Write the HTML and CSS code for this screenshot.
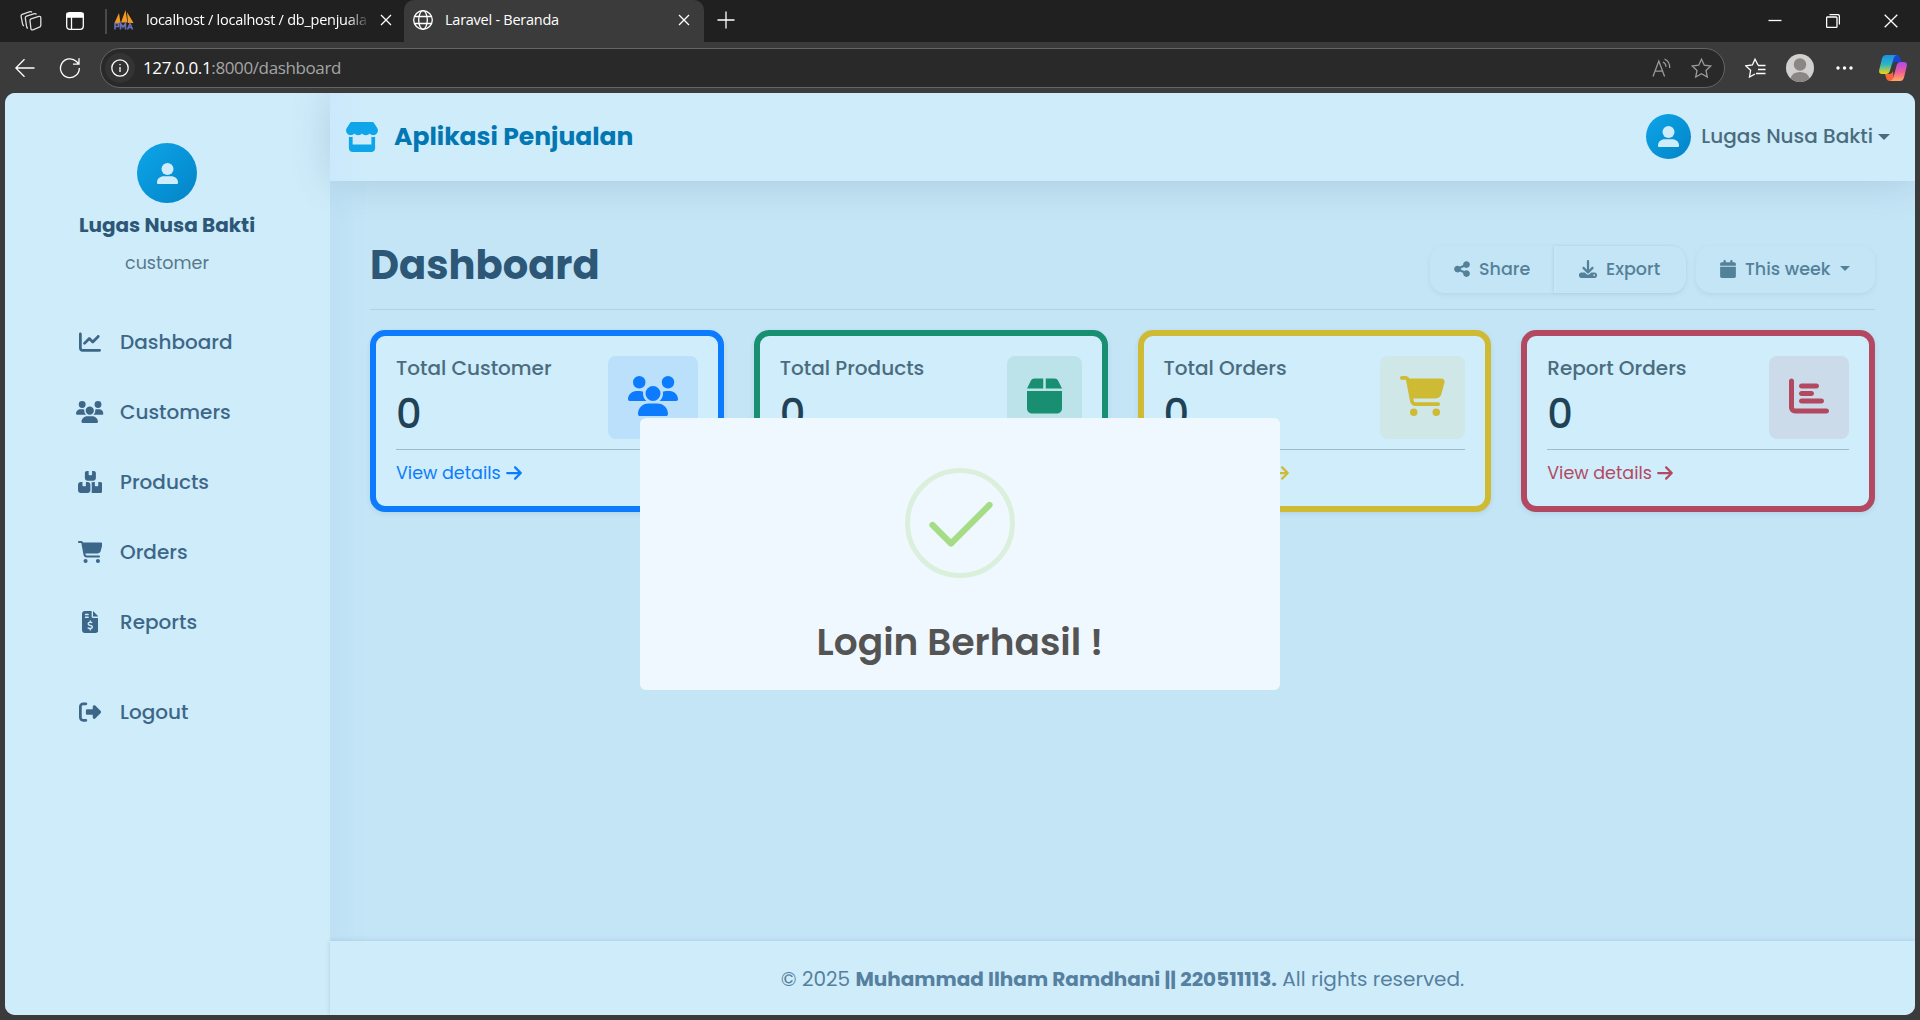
FILE: index.html
```html
<!DOCTYPE html>
<html lang="id">
<head>
<meta charset="utf-8">
<title>Laravel - Beranda</title>
<link rel="stylesheet" href="styles.css">
</head>
<body>
<svg class="defs" width="0" height="0">
  <defs>
    <symbol id="user" viewBox="0 0 21 21"><circle cx="10.5" cy="6" r="6"/><path d="M0 19.4C0 15.8 3 13.3 7 13.3h7c4 0 7 2.5 7 6.1 0 1.100-.5 1.600-1.300 1.600H1.300C.5 21 0 20.500 0 19.400z"/></symbol>
    <symbol id="store" viewBox="0 0 576 512"><path d="M547.6 103.8L490.3 13.1C485.2 5 476.1 0 466.4 0L109.6 0C99.900 0 90.800 5 85.700 13.100L28.300 103.800c-29.600 46.800-3.400 111.900 51.900 119.400c4 .5 8.100 .8 12.100 .8c26.100 0 49.300-11.400 65.200-29c15.900 17.600 39.100 29 65.200 29c26.100 0 49.300-11.400 65.200-29c15.900 17.600 39.100 29 65.200 29c26.200 0 49.300-11.400 65.200-29c16 17.600 39.100 29 65.200 29c4.100 0 8.100-.3 12.100-.8c55.500-7.400 81.800-72.500 52.100-119.400zM499.700 254.900l-.1 0c-5.300 .7-10.700 1.100-16.200 1.100c-12.400 0-24.300-1.900-35.400-5.300L448 384l-320 0 0-133.400c-11.200 3.500-23.200 5.400-35.600 5.400c-5.500 0-11-.4-16.300-1.100l-.1 0c-4.100-.6-8.100-1.300-12-2.300L64 384l0 64c0 35.300 28.700 64 64 64l320 0c35.300 0 64-28.700 64-64l0-64 0-131.400c-4 1-8 1.800-12.300 2.300z"/></symbol>
    <symbol id="line" viewBox="0 0 512 512"><path d="M64 64c0-17.700-14.300-32-32-32S0 46.300 0 64L0 400c0 44.200 35.800 80 80 80l400 0c17.700 0 32-14.300 32-32s-14.300-32-32-32L80 416c-8.800 0-16-7.200-16-16L64 64zm406.600 86.600c12.500-12.500 12.500-32.800 0-45.300s-32.800-12.500-45.300 0L320 210.700l-57.400-57.400c-12.500-12.500-32.800-12.500-45.300 0l-112 112c-12.500 12.500-12.500 32.800 0 45.300s32.800 12.500 45.300 0L240 221.300l57.400 57.400c12.500 12.500 32.800 12.500 45.300 0l128-128z"/></symbol>
    <symbol id="users" viewBox="0 0 640 512"><path d="M144 0a80 80 0 1 1 0 160A80 80 0 1 1 144 0zM512 0a80 80 0 1 1 0 160A80 80 0 1 1 512 0zM0 298.700C0 239.800 47.800 192 106.700 192l42.700 0c15.900 0 31 3.500 44.600 9.700c-1.300 7.200-1.900 14.700-1.900 22.300c0 38.200 16.800 72.500 43.300 96c-.2 0-.4 0-.7 0L21.300 320C9.600 320 0 310.400 0 298.700zM405.300 320c-.2 0-.4 0-.7 0c26.600-23.500 43.300-57.800 43.300-96c0-7.600-.7-15-1.900-22.300c13.600-6.300 28.700-9.700 44.600-9.700l42.700 0C592.200 192 640 239.800 640 298.700c0 11.800-9.600 21.300-21.300 21.300l-213.300 0zM224 224a96 96 0 1 1 192 0 96 96 0 1 1 -192 0zM128 485.300C128 411.700 187.700 352 261.300 352l117.300 0C452.300 352 512 411.700 512 485.300c0 14.700-11.900 26.700-26.700 26.700l-330.700 0c-14.700 0-26.700-11.900-26.700-26.700z"/></symbol>
    <symbol id="boxes" viewBox="0 0 576 512"><path d="M248 0L208 0c-26.500 0-48 21.500-48 48l0 112c0 35.300 28.700 64 64 64l128 0c35.300 0 64-28.700 64-64l0-112c0-26.500-21.500-48-48-48L328 0l0 80c0 8.800-7.200 16-16 16l-48 0c-8.800 0-16-7.200-16-16l0-80zM64 256c-35.300 0-64 28.700-64 64L0 448c0 35.300 28.700 64 64 64l160 0c35.300 0 64-28.700 64-64l0-128c0-35.300-28.700-64-64-64l-40 0 0 80c0 8.800-7.200 16-16 16l-48 0c-8.800 0-16-7.200-16-16l0-80-40 0zM352 512l160 0c35.300 0 64-28.700 64-64l0-128c0-35.300-28.700-64-64-64l-40 0 0 80c0 8.800-7.200 16-16 16l-48 0c-8.800 0-16-7.200-16-16l0-80-40 0c-15 0-28.800 5.100-39.700 13.800c4.900 10.400 7.700 22 7.700 34.200l0 160c0 12.200-2.800 23.800-7.700 34.200C323.200 506.900 337 512 352 512z"/></symbol>
    <symbol id="cart" viewBox="0 0 576 512"><path d="M0 24C0 10.700 10.700 0 24 0L69.500 0c22 0 41.500 12.800 50.600 32l411 0c26.300 0 45.500 25 38.600 50.400l-41 152.300c-8.500 31.400-37 53.300-69.500 53.300l-288.500 0 5.400 28.500c2.200 11.300 12.100 19.500 23.600 19.500L488 336c13.300 0 24 10.700 24 24s-10.700 24-24 24l-288.300 0c-34.600 0-64.300-24.600-70.700-58.500L77.400 54.500c-.7-3.800-4-6.500-7.900-6.500L24 48C10.700 48 0 37.300 0 24zM128 464a48 48 0 1 1 96 0 48 48 0 1 1 -96 0zm336-48a48 48 0 1 1 0 96 48 48 0 1 1 0-96z"/></symbol>
    <symbol id="invoice" viewBox="0 0 384 512"><path d="M64 0C28.700 0 0 28.700 0 64L0 448c0 35.300 28.700 64 64 64l256 0c35.300 0 64-28.700 64-64l0-288-128 0c-17.700 0-32-14.300-32-32L224 0 64 0zM256 0l0 128 128 0L256 0zM64 80c0-8.800 7.200-16 16-16l64 0c8.800 0 16 7.200 16 16s-7.200 16-16 16L80 96c-8.800 0-16-7.200-16-16zm0 64c0-8.800 7.200-16 16-16l64 0c8.800 0 16 7.200 16 16s-7.200 16-16 16l-64 0c-8.800 0-16-7.200-16-16zm128 72c8.800 0 16 7.200 16 16l0 17.300c8.500 1.200 16.700 3.100 24.100 5.100c8.500 2.300 13.600 11 11.300 19.600s-11 13.600-19.600 11.300c-11.100-3-22-5.200-32.100-5.300c-8.400-.1-17.400 1.800-23.600 5.500c-5.700 3.400-8.100 7.300-8.100 12.800c0 3.700 1.300 6.500 7.300 10.100c6.900 4.100 16.600 7.100 29.200 10.900l.5 .1c11.300 3.400 25.300 7.600 36.300 14.600c12.100 7.600 22.400 19.700 22.700 38.200c.3 19.300-9.600 33.300-22.900 41.600c-7.700 4.800-16.400 7.600-25.100 9.100l0 17.100c0 8.800-7.200 16-16 16s-16-7.200-16-16l0-17.800c-11.200-2.100-21.700-5.700-30.900-8.900c-2.100-.7-4.200-1.400-6.200-2.100c-8.400-2.800-12.900-11.900-10.100-20.200s11.900-12.900 20.200-10.100c2.500 .8 4.800 1.600 7.100 2.400c13.600 4.600 24.600 8.400 36.300 8.700c9.100 .3 17.900-1.700 23.700-5.300c5.100-3.200 7.900-7.300 7.800-14c-.1-4.600-1.800-7.800-7.700-11.600c-6.800-4.300-16.500-7.400-29-11.200l-1.600-.5c-11-3.300-24.300-7.300-34.800-13.700c-12-7.200-22.600-18.900-22.700-37.300c-.1-19.400 10.800-32.800 23.800-40.500c7.500-4.400 15.800-7.200 24.100-8.700l0-17.300c0-8.800 7.200-16 16-16z"/></symbol>
    <symbol id="logout" viewBox="0 0 512 512"><path d="M377.900 105.900L500.700 228.700c7.200 7.200 11.300 17.100 11.300 27.300s-4.100 20.100-11.300 27.300L377.900 406.100c-6.400 6.400-15 9.900-24 9.900c-18.700 0-33.900-15.200-33.900-33.900l0-62.100-128 0c-17.700 0-32-14.300-32-32l0-64c0-17.700 14.300-32 32-32l128 0 0-62.100c0-18.700 15.200-33.900 33.900-33.900c9 0 17.600 3.600 24 9.900zM160 96L96 96c-17.700 0-32 14.300-32 32l0 256c0 17.700 14.300 32 32 32l64 0c17.700 0 32 14.300 32 32s-14.300 32-32 32l-64 0c-53 0-96-43-96-96L0 128C0 75 43 32 96 32l64 0c17.700 0 32 14.300 32 32s-14.300 32-32 32z"/></symbol>
    <symbol id="box" viewBox="0 0 448 512"><path d="M50.700 58.500L0 160l208 0 0-128L93.700 32C75.500 32 58.900 42.300 50.700 58.500zM240 160l208 0L397.300 58.500C389.100 42.300 372.500 32 354.300 32L240 32l0 128zm208 32L0 192 0 416c0 35.300 28.700 64 64 64l320 0c35.300 0 64-28.700 64-64l0-224z"/></symbol>
    <symbol id="bar" viewBox="0 0 512 512"><path d="M32 32c17.700 0 32 14.300 32 32l0 336c0 8.800 7.200 16 16 16l400 0c17.700 0 32 14.300 32 32s-14.300 32-32 32L80 480c-44.200 0-80-35.800-80-80L0 64C0 46.300 14.300 32 32 32zm96 96c0-17.700 14.300-32 32-32l192 0c17.700 0 32 14.300 32 32s-14.300 32-32 32l-192 0c-17.700 0-32-14.300-32-32zm32 64l128 0c17.700 0 32 14.300 32 32s-14.300 32-32 32l-128 0c-17.700 0-32-14.300-32-32s14.300-32 32-32zm0 96l256 0c17.700 0 32 14.300 32 32s-14.300 32-32 32l-256 0c-17.700 0-32-14.300-32-32s14.300-32 32-32z"/></symbol>
    <symbol id="share" viewBox="0 0 448 512"><path d="M352 224c53 0 96-43 96-96s-43-96-96-96s-96 43-96 96c0 4 .2 8 .7 11.900l-94.100 47C145.400 170.200 121.900 160 96 160c-53 0-96 43-96 96s43 96 96 96c25.900 0 49.400-10.200 66.600-26.900l94.100 47c-.5 3.900-.7 7.800-.7 11.900c0 53 43 96 96 96s96-43 96-96s-43-96-96-96c-25.900 0-49.400 10.200-66.600 26.900l-94.100-47c.5-3.900 .7-7.800 .7-11.900s-.2-8-.7-11.900l94.100-47C302.600 213.800 326.100 224 352 224z"/></symbol>
    <symbol id="download" viewBox="0 0 512 512"><path d="M288 32c0-17.700-14.300-32-32-32s-32 14.300-32 32l0 242.700-73.400-73.400c-12.500-12.500-32.800-12.500-45.300 0s-12.500 32.800 0 45.300l128 128c12.500 12.500 32.800 12.500 45.300 0l128-128c12.500-12.500 12.500-32.800 0-45.300s-32.800-12.500-45.300 0L288 274.700 288 32zM64 352c-35.300 0-64 28.700-64 64l0 32c0 35.300 28.700 64 64 64l384 0c35.300 0 64-28.700 64-64l0-32c0-35.300-28.700-64-64-64l-101.500 0-45.300 45.300c-25 25-65.500 25-90.500 0L165.500 352 64 352zm368 56a24 24 0 1 1 0 48 24 24 0 1 1 0-48z"/></symbol>
    <symbol id="calendar" viewBox="0 0 448 512"><path d="M96 32l0 32L48 64C21.500 64 0 85.500 0 112l0 48 448 0 0-48c0-26.500-21.500-48-48-48l-48 0 0-32c0-17.700-14.300-32-32-32s-32 14.300-32 32l0 32L160 64l0-32c0-17.700-14.300-32-32-32S96 14.300 96 32zM448 192L0 192 0 464c0 26.500 21.500 48 48 48l352 0c26.500 0 48-21.500 48-48l0-272z"/></symbol>
    <symbol id="arrow" viewBox="0 0 448 512"><path d="M438.600 278.600c12.500-12.500 12.500-32.800 0-45.300l-160-160c-12.500-12.500-32.800-12.500-45.300 0s-12.500 32.800 0 45.300L338.800 224 32 224c-17.700 0-32 14.300-32 32s14.300 32 32 32l306.700 0L233.400 393.400c-12.500 12.500-12.500 32.800 0 45.300s32.800 12.500 45.300 0l160-160z"/></symbol>
    <linearGradient id="g1" x1="0" y1="0" x2="0" y2="1"><stop offset="0" stop-color="#1b8fe8"/><stop offset=".5" stop-color="#2fb6c0"/><stop offset="1" stop-color="#f2d50c"/></linearGradient>
    <linearGradient id="g2" x1="0" y1="0" x2="0" y2="1"><stop offset="0" stop-color="#a94bf0"/><stop offset=".5" stop-color="#ee5b9a"/><stop offset="1" stop-color="#ffab5c"/></linearGradient>
  </defs>
</svg>

<div class="window">
  <div class="tabstrip">
    <svg class="tool workspaces" width="22" height="22" viewBox="0 0 22 22"><path d="M11 8.800l7.800-2.400q2-.5 2 1.500v7.300q0 1.500-1.400 2l-6.500 2.600q-1.800.6-2-1.200l-.9-7.800q-.1-1.500 1-2z"/><path d="M8 18.300Q6.800 18 6.600 16.600L5.300 8.200q-.2-1.500 1.200-2l8-2.500q1.400-.4 1.900.9"/><path d="M4 15.800Q2.900 15.500 2.600 14.100L1.100 6.300q-.3-1.500 1.100-2l7.800-2.600q1.300-.4 1.900.6"/></svg>
    <svg class="tool tabs-menu" width="18" height="18" viewBox="0 0 18 18"><rect x=".7" y=".7" width="16.600" height="16.600" rx="3"/><path d="M1 1.500h16v3.500H1z" fill="#fff"/><path d="M5.500 5v12"/></svg>
    <div class="divider"></div>
    <div class="tab tab-db">
      <svg width="20" height="20" viewBox="0 0 20 20"><path d="M.5 13L5 3l1.500 10zM7 12.500L11.500 0l2 12.500zM13 2l6.500 11H14z" fill="#f59a1e"/><path d="M1 19.500v-6h3.500v3H1M6.500 19.500v-6l2.500 3.500 2.500-3.500v6M13.500 19.500l2.500-6 2.500 6M14.500 17.500h3" stroke="#6c71b5" stroke-width="1.600" fill="none"/></svg>
      <span class="tab-title fade">localhost / localhost / db_penjuala</span>
      <svg class="x" width="12" height="12" viewBox="0 0 12 12"><path d="M1 1l10 10M11 1L1 11"/></svg>
    </div>
    <div class="tab tab-active">
      <svg class="globe" width="20" height="20" viewBox="0 0 20 20"><circle cx="10" cy="10" r="9.300"/><ellipse cx="10" cy="10" rx="4.300" ry="9.300"/><path d="M1.700 6.500h16.600M1.700 13.500h16.600"/></svg>
      <span class="tab-title">Laravel - Beranda</span>
      <svg class="x" width="12" height="12" viewBox="0 0 12 12"><path d="M1 1l10 10M11 1L1 11"/></svg>
    </div>
    <svg class="plus" width="18" height="18" viewBox="0 0 18 18"><path d="M9 .5v17M.5 9h17"/></svg>
    <div class="controls">
      <svg width="14" height="14" viewBox="0 0 14 14"><path d="M.5 6.500h13"/></svg>
      <svg width="14" height="14" viewBox="0 0 14 14"><rect x=".6" y="3" width="10.400" height="10.400" rx="1"/><path d="M3.500 .6h8q1.900 0 1.900 1.900v8"/></svg>
      <svg width="14" height="14" viewBox="0 0 14 14"><path d="M.7 .7l12.600 12.600M13.300 .7L.7 13.300"/></svg>
    </div>
  </div>
  <div class="toolbar">
    <svg class="back" width="20" height="20" viewBox="0 0 20 20"><path d="M19.500 10H1M9.500 1.200L.8 10l8.700 8.800"/></svg>
    <svg class="reload" width="22" height="22" viewBox="0 0 22 22"><path d="M20.300 11a9.400 9.400 0 1 1-2.800-6.500l2 2.200M20 1.200v6h-6"/></svg>
    <div class="address">
      <div class="info"><svg width="18" height="18" viewBox="0 0 18 18"><circle cx="9" cy="9" r="8.200"/><path d="M9 8v5M9 5v1.300"/></svg></div>
      <span class="url"><b>127.0.0.1</b>:8000/dashboard</span>
      <svg class="dim read" width="20" height="20" viewBox="0 0 20 20"><path d="M1 18.500L6.800 3l5.800 15.500M3 13.200h7.600M11 4q3 1.700 3 4.800M12.500 1q5.500 2.500 5.200 9"/></svg>
      <svg class="dim" width="21" height="21" viewBox="0 0 21 21"><path d="M10.500 1.200l2.800 6 6.500.8-4.800 4.500 1.300 6.500-5.800-3.200-5.800 3.200L6 12.500 1.200 8l6.500-.8z"/></svg>
    </div>
    <svg class="fav" width="21" height="20" viewBox="0 0 21 20"><path d="M13 7l-3-5.800L7.400 7l-6.600.9 4.800 4.400L4.500 19l5.500-3M13 7.500h7.500M13 11.500h7.500M11 15.500h9.500M12.400 6.500l1 .6"/></svg>
    <svg class="profile" width="28" height="28" viewBox="0 0 28 28"><circle cx="14" cy="14" r="14" fill="#d2d0ce"/><circle cx="14" cy="10.500" r="6.200" fill="#8a8684"/><path d="M4.500 24.300q2-6.300 9.500-6.300t9.500 6.300A14 14 0 0 1 4.500 24.300z" fill="#8a8684"/></svg>
    <svg class="more" width="17" height="4" viewBox="0 0 17 4"><circle cx="2" cy="2" r="1.700"/><circle cx="8.500" cy="2" r="1.700"/><circle cx="15" cy="2" r="1.700"/></svg>
    <svg class="copilot" width="28" height="26" viewBox="0 0 28 26"><path d="M13 0h5q2.500 0 3.300 3l1.200 4h-5.500q-2.500 0-3.500 3z" fill="#1747c9"/><path d="M7 0h11q-2.500.5-3.300 3L11 15.500Q10 19 7 19H3q-3.500 0-2.800-4L3 3.500Q4 0 7 0z" fill="url(#g1)"/><path d="M15 26h-5q-2 0-2.800-3L6 19h5q2 0 3-3z" fill="#f4663a"/><path d="M21 26H11q2.500-.5 3.300-3L17.500 11q.8-4 4-4H25q3.500 0 2.800 4L25 22.500Q24 26 21 26z" fill="url(#g2)"/></svg>
  </div>

  <div class="page">
    <aside class="sidebar">
      <div class="avatar big"><svg width="21" height="21"><use href="#user"/></svg></div>
      <div class="side-name">Lugas Nusa Bakti</div>
      <div class="side-role">customer</div>
      <nav class="nav">
        <a><i><svg width="22" height="22"><use href="#line"/></svg></i><span>Dashboard</span></a>
        <a><i><svg width="27.500" height="22"><use href="#users"/></svg></i><span>Customers</span></a>
        <a><i><svg width="24.750" height="22"><use href="#boxes"/></svg></i><span>Products</span></a>
        <a><i><svg width="24.750" height="22"><use href="#cart"/></svg></i><span>Orders</span></a>
        <a><i><svg width="16.500" height="22"><use href="#invoice"/></svg></i><span>Reports</span></a>
        <a class="logout"><i><svg width="22" height="22"><use href="#logout"/></svg></i><span>Logout</span></a>
      </nav>
    </aside>
    <div class="main">
      <header class="header">
        <svg class="brand-icon" width="34" height="30"><use href="#store"/></svg>
        <span class="brand">Aplikasi Penjualan</span>
        <div class="account">
          <div class="avatar"><svg width="21" height="21"><use href="#user"/></svg></div>
          <span class="account-name">Lugas Nusa Bakti</span>
          <span class="caret"></span>
        </div>
      </header>
      <main class="content">
        <div class="title-row">
          <h1>Dashboard</h1>
          <div class="actions">
            <div class="group">
              <button class="b-share"><svg width="16" height="18"><use href="#share"/></svg><span>Share</span></button>
              <button class="b-export"><svg width="18" height="18"><use href="#download"/></svg><span>Export</span></button>
            </div>
            <button class="b-week"><svg width="16" height="18"><use href="#calendar"/></svg><span>This week</span><span class="caret small"></span></button>
          </div>
        </div>
        <div class="cards">
          <section class="card blue">
            <div class="card-top"><div><div class="card-title">Total Customer</div><div class="count">0</div></div><div class="tile"><svg width="50" height="40"><use href="#users"/></svg></div></div>
            <a class="details"><span>View details</span><svg width="16" height="18"><use href="#arrow"/></svg></a>
          </section>
          <section class="card green">
            <div class="card-top"><div><div class="card-title">Total Products</div><div class="count">0</div></div><div class="tile"><svg width="35" height="40"><use href="#box"/></svg></div></div>
            <a class="details"><span>View details</span><svg width="16" height="18"><use href="#arrow"/></svg></a>
          </section>
          <section class="card yellow">
            <div class="card-top"><div><div class="card-title">Total Orders</div><div class="count">0</div></div><div class="tile"><svg width="45" height="40"><use href="#cart"/></svg></div></div>
            <a class="details"><span>View details</span><svg width="16" height="18"><use href="#arrow"/></svg></a>
          </section>
          <section class="card red">
            <div class="card-top"><div><div class="card-title">Report Orders</div><div class="count">0</div></div><div class="tile"><svg width="40" height="40"><use href="#bar"/></svg></div></div>
            <a class="details"><span>View details</span><svg width="16" height="18"><use href="#arrow"/></svg></a>
          </section>
        </div>
      </main>
      <footer class="footer"><span>© 2025 <b>Muhammad Ilham Ramdhani || 220511113.</b> All rights reserved.</span></footer>
    </div>
    <div class="modal">
      <svg width="110" height="110" viewBox="0 0 110 110"><circle cx="55" cy="55" r="52.500" fill="none" stroke="#dbf0dc" stroke-width="5"/><path d="M27.500 57L46 75.500 84.500 37" fill="none" stroke="#a5dc86" stroke-width="6.250" stroke-linecap="round" stroke-linejoin="round"/></svg>
      <h2>Login Berhasil !</h2>
    </div>
  </div>
</div>
</body>
</html>
```
FILE: styles.css
```css
* { box-sizing: border-box; }
body {
  margin: 0;
  width: 1920px;
  height: 1020px;
  overflow: hidden;
  background: #3b3b3b;
  font-family: "Poppins", "Inter", sans-serif;
  font-feature-settings: "cv11";
}
.defs { position: absolute; }
svg { display: block; flex: none; }

.window { display: flex; flex-direction: column; height: 1020px; }

/* browser frame */
.tabstrip, .toolbar { display: flex; font-family: "Segoe UI", "Open Sans", sans-serif; font-feature-settings: normal; }
.tabstrip { height: 42px; background: #202020; align-items: center; padding-left: 20px; }
.tabstrip svg, .toolbar svg { fill: none; stroke: #fff; stroke-width: 1.3; }
.tabstrip .workspaces { margin-top: -1px; stroke: #ddd; }
.tabs-menu { margin: -1px 0 0 24px; }
.divider { width: 2px; height: 25px; background: #4a4a4a; margin-left: 21px; }
.tab { display: flex; align-items: center; height: 42px; color: #fff; font-size: 14.5px; letter-spacing: -.25px; padding-bottom: 2px; }
.tab-db { width: 297px; padding-left: 7px; }
.tab-db svg:first-child { stroke: none; }
.tab-title { margin-left: 12px; flex: 1; white-space: nowrap; line-height: 24px; padding-bottom: 1px; }
.tab-title.fade { flex: none; width: 224px; -webkit-mask-image: linear-gradient(90deg, #000 90%, transparent); mask-image: linear-gradient(90deg, #000 90%, transparent); }
.tab-db .x { margin-left: 10px; }
.tab-active { width: 300px; background: #3b3b3b; border-radius: 10px 10px 0 0; padding: 0 14px 2px 9px; }
.plus { margin: -3px 0 0 13px; }
.controls { margin-left: auto; display: flex; gap: 44px; padding-right: 22px; }

.toolbar { height: 51px; align-items: center; padding: 1px 13px 0 15px; }
.reload { margin-left: 24px; }
.address { display: flex; align-items: center; margin-left: 19px; width: 1625px; height: 40px; border: 1px solid #666; border-radius: 20px; background: #292929; padding: 0 12px 0 4px; }
.info { display: flex; align-items: center; justify-content: center; width: 30px; height: 30px; border-radius: 50%; background: #333; }
.url { flex: 1; margin-left: 8px; padding-bottom: 2px; font-size: 17px; letter-spacing: -.38px; color: #a5a5a5; }
.url b { font-weight: 400; color: #fff; }
.toolbar svg.dim { stroke: #9a9a9a; }
.read { margin-right: 19px; }
.fav { margin-left: 20px; }
.toolbar .profile { margin-left: 20px; stroke: none; }
.toolbar .more { margin-left: 22px; fill: #fff; stroke: none; }
.toolbar .copilot { margin-left: 26px; stroke: none; }

/* page */
.page { position: relative; display: flex; width: 1910px; height: 922px; margin-left: 5px; border-radius: 10px; overflow: hidden; background: #c4e5f6; }
.sidebar { position: relative; width: 325px; background: #cfecfa; padding-top: 50px; box-shadow: 0 0 40px rgba(60, 120, 200, .09); }
.avatar { display: flex; align-items: center; justify-content: center; width: 45px; height: 45px; border-radius: 50%; background: linear-gradient(135deg, #0ea5e9, #0284c7); fill: #cfecfa; }
.avatar.big { width: 60px; height: 60px; margin: 0 0 0 132px; }
.side-name, .side-role { width: 324px; text-align: center; }
.side-name { margin-top: 8px; line-height: 28px; font-size: 20px; font-weight: 700; color: #2c5777; }
.side-role { margin-top: 12px; line-height: 24px; font-size: 17.500px; color: #58788a; }
.nav { margin-top: 32px; }
.nav a { display: flex; align-items: center; gap: 15px; height: 70px; padding-left: 70px; font-size: 20px; font-weight: 500; color: #3d6788; fill: #3d6788; }
.nav i { display: flex; justify-content: center; width: 30px; }
.nav .logout { margin-top: 20px; }

.main { display: flex; flex-direction: column; flex: 1; }
.header { position: relative; display: flex; align-items: center; height: 88px; padding: 0 25px 1px 15px; background: linear-gradient(90deg, #cae9fb, #cfecfa 40px); box-shadow: 0 0 40px rgba(50, 90, 120, .2); }
.brand-icon { fill: #0ea5e9; }
.brand { margin-left: 15px; font-size: 25px; font-weight: 700; color: #0277b2; }
.account { display: flex; align-items: center; margin-left: auto; color: #4a6c7e; font-size: 20px; font-weight: 500; }
.account-name { margin-left: 10px; padding-bottom: 2px; }
.caret { border: 6px solid transparent; border-top: 6px solid; border-bottom: 0; margin-left: 5px; }

.content { flex: 1; padding: 0 40px; }
.title-row { display: flex; justify-content: space-between; height: 129px; padding-top: 48px; border-bottom: 1px solid #afd2e4; }
h1 { margin: 0; line-height: 73px; font-size: 40px; font-weight: 700; color: #2c5777; }
.actions { display: flex; gap: 10px; margin-top: 17px; height: 47px; }
.group { display: flex; border-radius: 15px; box-shadow: 0 2px 5px rgba(60, 120, 160, .12); }
button { display: flex; align-items: center; border: 0; margin: 0; padding: 0 0 2px; background: #c4e5f6; border-radius: 15px; box-shadow: 0 2px 5px rgba(60, 120, 160, .12); font: inherit; font-size: 17.500px; font-weight: 500; color: #54819a; fill: #54819a; }
.group button { box-shadow: none; }
.b-share { width: 124px; padding-left: 24px; border-radius: 15px 0 0 15px; }
.group .b-export { width: 132px; padding-left: 23px; border-left: 2px solid #c7e7f7; border-radius: 0 15px 15px 0; box-shadow: -1px 0 3px rgba(60, 120, 160, .14); }
.b-week { width: 179px; padding-left: 24px; }
button span { margin-left: 9px; }
.caret.small { border-width: 5px 5px 0; margin-left: 10px; }

.cards { display: grid; grid-template-columns: repeat(4, 1fr); gap: 30px; margin-top: 20px; }
.card { height: 182px; padding: 20px; border: 6px solid var(--c); border-radius: 15px; background: #cfedfb; box-shadow: 0 2px 5px rgba(50, 100, 150, .12); color: var(--c); }
.blue { --c: #0d7bfd; --t: #bbe0fb; }
.green { --c: #178f70; --t: #bde3ea; }
.yellow { --c: #cfbb33; --t: #cfe7e6; }
.red { --c: #b34961; --t: #ccdbea; }
.card-top { display: flex; justify-content: space-between; height: 94px; padding-bottom: 10px; border-bottom: 1px solid #9dbccb; }
.card-title { line-height: 25px; font-size: 20px; font-weight: 500; color: #4a6c7e; }
.count { margin-top: 8px; line-height: 50px; font-size: 40px; font-weight: 500; color: #1f4257; }
.tile { display: flex; align-items: center; justify-content: center; padding: 0 20px; border-radius: 8px; background: var(--t); fill: var(--c); }
.tile svg { margin-top: -3px; }
.details { display: flex; align-items: center; gap: 5px; margin-top: 11px; line-height: 24px; font-size: 17.500px; fill: var(--c); }

.footer { position: relative; display: flex; align-items: center; justify-content: center; height: 74px; background: #cfecfa; color: #5580a0; font-size: 20px; box-shadow: 0 0 5px rgba(50, 90, 120, .2); padding-top: 2px; }

/* alert over the page */
.modal { position: absolute; left: 635px; top: 325px; width: 640px; height: 272px; padding-top: 50px; border-radius: 6px; background: #f0f8ff; }
.modal svg { margin: 0 auto; }
h2 { margin: 40px 0 0; text-align: center; line-height: 48px; font-size: 37.500px; font-weight: 600; color: #545454; }
```
